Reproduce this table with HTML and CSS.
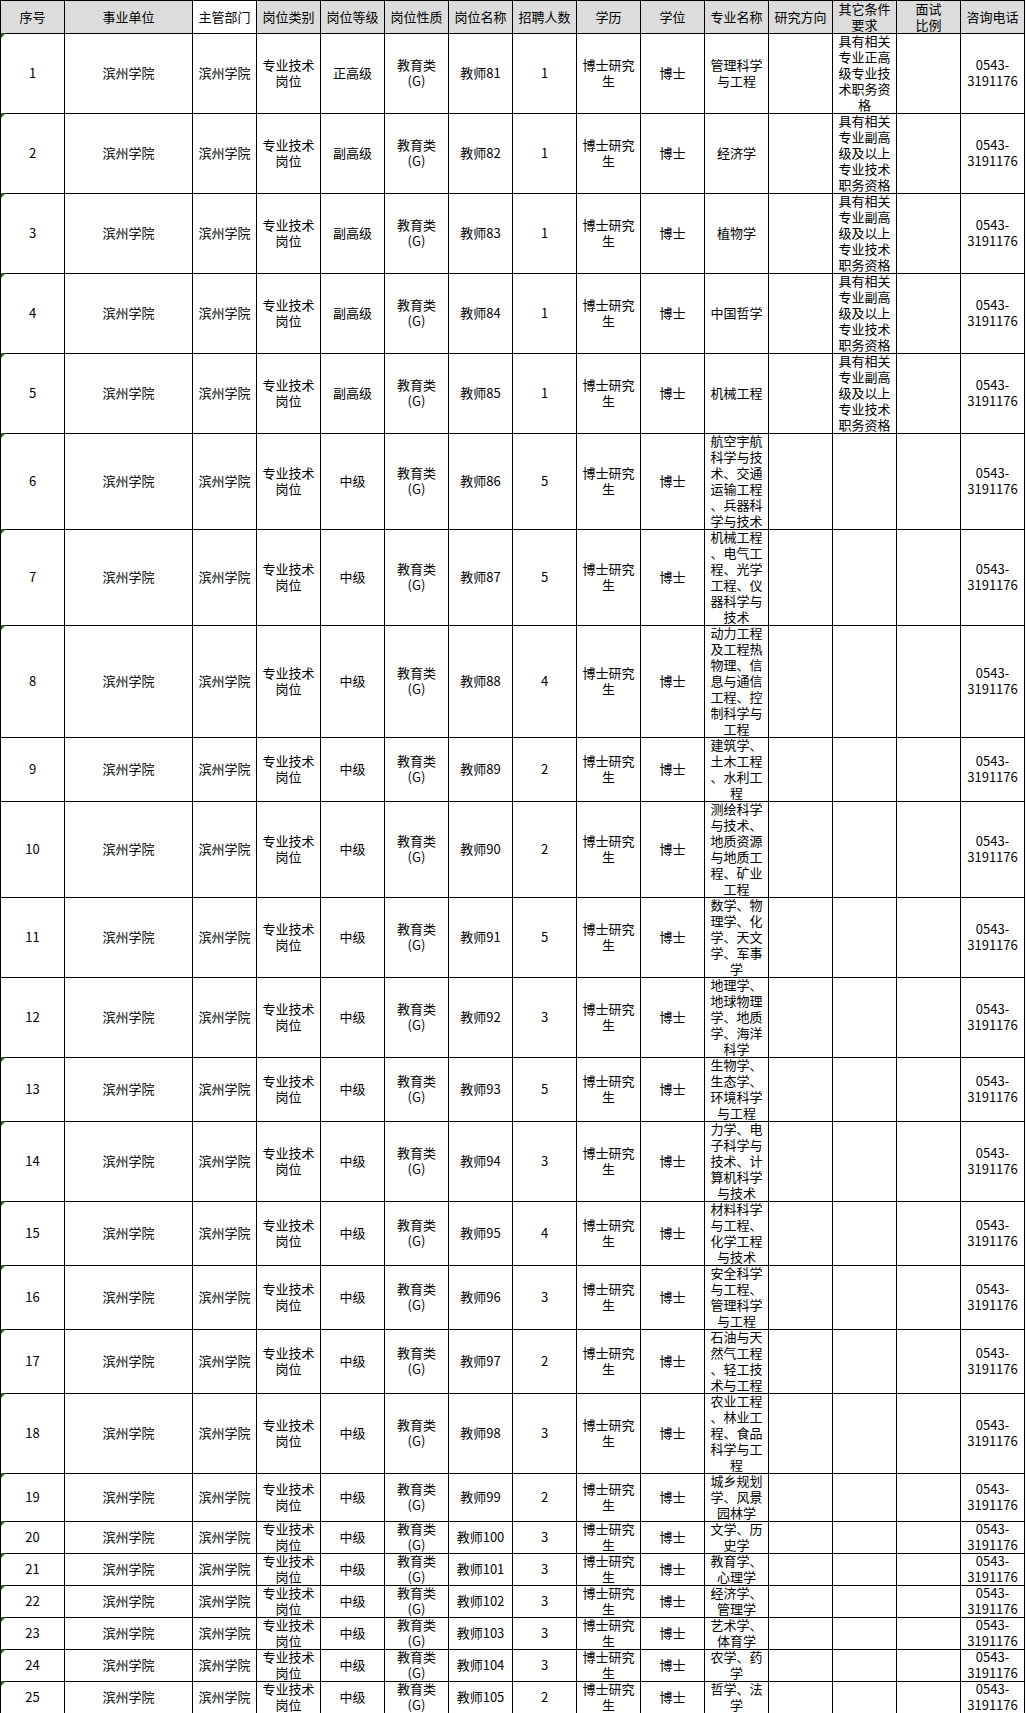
FILE: index.html
```html
<!DOCTYPE html>
<html lang="zh-CN">
<head>
<meta charset="utf-8">
<title>滨州学院 岗位表</title>
<link rel="stylesheet" href="styles.css">
</head>
<body>
<div class="sheet">
  <div class="row head h2">
    <div class="cell">序号</div>
    <div class="cell">事业单位</div>
    <div class="cell white">主管部门</div>
    <div class="cell">岗位类别</div>
    <div class="cell">岗位等级</div>
    <div class="cell">岗位性质</div>
    <div class="cell">岗位名称</div>
    <div class="cell">招聘人数</div>
    <div class="cell">学历</div>
    <div class="cell">学位</div>
    <div class="cell">专业名称</div>
    <div class="cell">研究方向</div>
    <div class="cell">其它条件<br>要求</div>
    <div class="cell">面试<br>比例</div>
    <div class="cell">咨询电话</div>
  </div>

  <div class="row h5">
    <div class="cell mark">1</div><div class="cell">滨州学院</div><div class="cell">滨州学院</div><div class="cell">专业技术<br>岗位</div><div class="cell">正高级</div><div class="cell">教育类<br>(G)</div><div class="cell">教师81</div><div class="cell">1</div><div class="cell">博士研究<br>生</div><div class="cell">博士</div><div class="cell">管理科学<br>与工程</div><div class="cell"></div><div class="cell">具有相关<br>专业正高<br>级专业技<br>术职务资<br>格</div><div class="cell"></div><div class="cell">0543-<br>3191176</div>
  </div>
  <div class="row h5">
    <div class="cell mark">2</div><div class="cell">滨州学院</div><div class="cell">滨州学院</div><div class="cell">专业技术<br>岗位</div><div class="cell">副高级</div><div class="cell">教育类<br>(G)</div><div class="cell">教师82</div><div class="cell">1</div><div class="cell">博士研究<br>生</div><div class="cell">博士</div><div class="cell">经济学</div><div class="cell"></div><div class="cell">具有相关<br>专业副高<br>级及以上<br>专业技术<br>职务资格</div><div class="cell"></div><div class="cell">0543-<br>3191176</div>
  </div>
  <div class="row h5">
    <div class="cell mark">3</div><div class="cell">滨州学院</div><div class="cell">滨州学院</div><div class="cell">专业技术<br>岗位</div><div class="cell">副高级</div><div class="cell">教育类<br>(G)</div><div class="cell">教师83</div><div class="cell">1</div><div class="cell">博士研究<br>生</div><div class="cell">博士</div><div class="cell">植物学</div><div class="cell"></div><div class="cell">具有相关<br>专业副高<br>级及以上<br>专业技术<br>职务资格</div><div class="cell"></div><div class="cell">0543-<br>3191176</div>
  </div>
  <div class="row h5">
    <div class="cell mark">4</div><div class="cell">滨州学院</div><div class="cell">滨州学院</div><div class="cell">专业技术<br>岗位</div><div class="cell">副高级</div><div class="cell">教育类<br>(G)</div><div class="cell">教师84</div><div class="cell">1</div><div class="cell">博士研究<br>生</div><div class="cell">博士</div><div class="cell">中国哲学</div><div class="cell"></div><div class="cell">具有相关<br>专业副高<br>级及以上<br>专业技术<br>职务资格</div><div class="cell"></div><div class="cell">0543-<br>3191176</div>
  </div>
  <div class="row h5">
    <div class="cell mark">5</div><div class="cell">滨州学院</div><div class="cell">滨州学院</div><div class="cell">专业技术<br>岗位</div><div class="cell">副高级</div><div class="cell">教育类<br>(G)</div><div class="cell">教师85</div><div class="cell">1</div><div class="cell">博士研究<br>生</div><div class="cell">博士</div><div class="cell">机械工程</div><div class="cell"></div><div class="cell">具有相关<br>专业副高<br>级及以上<br>专业技术<br>职务资格</div><div class="cell"></div><div class="cell">0543-<br>3191176</div>
  </div>
  <div class="row h6">
    <div class="cell mark">6</div><div class="cell">滨州学院</div><div class="cell">滨州学院</div><div class="cell">专业技术<br>岗位</div><div class="cell">中级</div><div class="cell">教育类<br>(G)</div><div class="cell">教师86</div><div class="cell">5</div><div class="cell">博士研究<br>生</div><div class="cell">博士</div><div class="cell">航空宇航<br>科学与技<br>术、交通<br>运输工程<br>、兵器科<br>学与技术</div><div class="cell"></div><div class="cell"></div><div class="cell"></div><div class="cell">0543-<br>3191176</div>
  </div>
  <div class="row h6">
    <div class="cell mark">7</div><div class="cell">滨州学院</div><div class="cell">滨州学院</div><div class="cell">专业技术<br>岗位</div><div class="cell">中级</div><div class="cell">教育类<br>(G)</div><div class="cell">教师87</div><div class="cell">5</div><div class="cell">博士研究<br>生</div><div class="cell">博士</div><div class="cell">机械工程<br>、电气工<br>程、光学<br>工程、仪<br>器科学与<br>技术</div><div class="cell"></div><div class="cell"></div><div class="cell"></div><div class="cell">0543-<br>3191176</div>
  </div>
  <div class="row h7">
    <div class="cell mark">8</div><div class="cell">滨州学院</div><div class="cell">滨州学院</div><div class="cell">专业技术<br>岗位</div><div class="cell">中级</div><div class="cell">教育类<br>(G)</div><div class="cell">教师88</div><div class="cell">4</div><div class="cell">博士研究<br>生</div><div class="cell">博士</div><div class="cell">动力工程<br>及工程热<br>物理、信<br>息与通信<br>工程、控<br>制科学与<br>工程</div><div class="cell"></div><div class="cell"></div><div class="cell"></div><div class="cell">0543-<br>3191176</div>
  </div>
  <div class="row h4">
    <div class="cell">9</div><div class="cell">滨州学院</div><div class="cell">滨州学院</div><div class="cell">专业技术<br>岗位</div><div class="cell">中级</div><div class="cell">教育类<br>(G)</div><div class="cell">教师89</div><div class="cell">2</div><div class="cell">博士研究<br>生</div><div class="cell">博士</div><div class="cell">建筑学、<br>土木工程<br>、水利工<br>程</div><div class="cell"></div><div class="cell"></div><div class="cell"></div><div class="cell">0543-<br>3191176</div>
  </div>
  <div class="row h6">
    <div class="cell">10</div><div class="cell">滨州学院</div><div class="cell">滨州学院</div><div class="cell">专业技术<br>岗位</div><div class="cell">中级</div><div class="cell">教育类<br>(G)</div><div class="cell">教师90</div><div class="cell">2</div><div class="cell">博士研究<br>生</div><div class="cell">博士</div><div class="cell">测绘科学<br>与技术、<br>地质资源<br>与地质工<br>程、矿业<br>工程</div><div class="cell"></div><div class="cell"></div><div class="cell"></div><div class="cell">0543-<br>3191176</div>
  </div>
  <div class="row h5">
    <div class="cell">11</div><div class="cell">滨州学院</div><div class="cell">滨州学院</div><div class="cell">专业技术<br>岗位</div><div class="cell">中级</div><div class="cell">教育类<br>(G)</div><div class="cell">教师91</div><div class="cell">5</div><div class="cell">博士研究<br>生</div><div class="cell">博士</div><div class="cell">数学、物<br>理学、化<br>学、天文<br>学、军事<br>学</div><div class="cell"></div><div class="cell"></div><div class="cell"></div><div class="cell">0543-<br>3191176</div>
  </div>
  <div class="row h5">
    <div class="cell">12</div><div class="cell">滨州学院</div><div class="cell">滨州学院</div><div class="cell">专业技术<br>岗位</div><div class="cell">中级</div><div class="cell">教育类<br>(G)</div><div class="cell">教师92</div><div class="cell">3</div><div class="cell">博士研究<br>生</div><div class="cell">博士</div><div class="cell">地理学、<br>地球物理<br>学、地质<br>学、海洋<br>科学</div><div class="cell"></div><div class="cell"></div><div class="cell"></div><div class="cell">0543-<br>3191176</div>
  </div>
  <div class="row h4">
    <div class="cell mark">13</div><div class="cell">滨州学院</div><div class="cell">滨州学院</div><div class="cell">专业技术<br>岗位</div><div class="cell">中级</div><div class="cell">教育类<br>(G)</div><div class="cell">教师93</div><div class="cell">5</div><div class="cell">博士研究<br>生</div><div class="cell">博士</div><div class="cell">生物学、<br>生态学、<br>环境科学<br>与工程</div><div class="cell"></div><div class="cell"></div><div class="cell"></div><div class="cell">0543-<br>3191176</div>
  </div>
  <div class="row h5">
    <div class="cell mark">14</div><div class="cell">滨州学院</div><div class="cell">滨州学院</div><div class="cell">专业技术<br>岗位</div><div class="cell">中级</div><div class="cell">教育类<br>(G)</div><div class="cell">教师94</div><div class="cell">3</div><div class="cell">博士研究<br>生</div><div class="cell">博士</div><div class="cell">力学、电<br>子科学与<br>技术、计<br>算机科学<br>与技术</div><div class="cell"></div><div class="cell"></div><div class="cell"></div><div class="cell">0543-<br>3191176</div>
  </div>
  <div class="row h4">
    <div class="cell mark">15</div><div class="cell">滨州学院</div><div class="cell">滨州学院</div><div class="cell">专业技术<br>岗位</div><div class="cell">中级</div><div class="cell">教育类<br>(G)</div><div class="cell">教师95</div><div class="cell">4</div><div class="cell">博士研究<br>生</div><div class="cell">博士</div><div class="cell">材料科学<br>与工程、<br>化学工程<br>与技术</div><div class="cell"></div><div class="cell"></div><div class="cell"></div><div class="cell">0543-<br>3191176</div>
  </div>
  <div class="row h4">
    <div class="cell mark">16</div><div class="cell">滨州学院</div><div class="cell">滨州学院</div><div class="cell">专业技术<br>岗位</div><div class="cell">中级</div><div class="cell">教育类<br>(G)</div><div class="cell">教师96</div><div class="cell">3</div><div class="cell">博士研究<br>生</div><div class="cell">博士</div><div class="cell">安全科学<br>与工程、<br>管理科学<br>与工程</div><div class="cell"></div><div class="cell"></div><div class="cell"></div><div class="cell">0543-<br>3191176</div>
  </div>
  <div class="row h4">
    <div class="cell mark">17</div><div class="cell">滨州学院</div><div class="cell">滨州学院</div><div class="cell">专业技术<br>岗位</div><div class="cell">中级</div><div class="cell">教育类<br>(G)</div><div class="cell">教师97</div><div class="cell">2</div><div class="cell">博士研究<br>生</div><div class="cell">博士</div><div class="cell">石油与天<br>然气工程<br>、轻工技<br>术与工程</div><div class="cell"></div><div class="cell"></div><div class="cell"></div><div class="cell">0543-<br>3191176</div>
  </div>
  <div class="row h5">
    <div class="cell mark">18</div><div class="cell">滨州学院</div><div class="cell">滨州学院</div><div class="cell">专业技术<br>岗位</div><div class="cell">中级</div><div class="cell">教育类<br>(G)</div><div class="cell">教师98</div><div class="cell">3</div><div class="cell">博士研究<br>生</div><div class="cell">博士</div><div class="cell">农业工程<br>、林业工<br>程、食品<br>科学与工<br>程</div><div class="cell"></div><div class="cell"></div><div class="cell"></div><div class="cell">0543-<br>3191176</div>
  </div>
  <div class="row h3">
    <div class="cell mark">19</div><div class="cell">滨州学院</div><div class="cell">滨州学院</div><div class="cell">专业技术<br>岗位</div><div class="cell">中级</div><div class="cell">教育类<br>(G)</div><div class="cell">教师99</div><div class="cell">2</div><div class="cell">博士研究<br>生</div><div class="cell">博士</div><div class="cell">城乡规划<br>学、风景<br>园林学</div><div class="cell"></div><div class="cell"></div><div class="cell"></div><div class="cell">0543-<br>3191176</div>
  </div>
  <div class="row h2">
    <div class="cell mark">20</div><div class="cell">滨州学院</div><div class="cell">滨州学院</div><div class="cell">专业技术<br>岗位</div><div class="cell">中级</div><div class="cell">教育类<br>(G)</div><div class="cell">教师100</div><div class="cell">3</div><div class="cell">博士研究<br>生</div><div class="cell">博士</div><div class="cell">文学、历<br>史学</div><div class="cell"></div><div class="cell"></div><div class="cell"></div><div class="cell">0543-<br>3191176</div>
  </div>
  <div class="row h2">
    <div class="cell mark">21</div><div class="cell">滨州学院</div><div class="cell">滨州学院</div><div class="cell">专业技术<br>岗位</div><div class="cell">中级</div><div class="cell">教育类<br>(G)</div><div class="cell">教师101</div><div class="cell">3</div><div class="cell">博士研究<br>生</div><div class="cell">博士</div><div class="cell">教育学、<br>心理学</div><div class="cell"></div><div class="cell"></div><div class="cell"></div><div class="cell">0543-<br>3191176</div>
  </div>
  <div class="row h2">
    <div class="cell mark">22</div><div class="cell">滨州学院</div><div class="cell">滨州学院</div><div class="cell">专业技术<br>岗位</div><div class="cell">中级</div><div class="cell">教育类<br>(G)</div><div class="cell">教师102</div><div class="cell">3</div><div class="cell">博士研究<br>生</div><div class="cell">博士</div><div class="cell">经济学、<br>管理学</div><div class="cell"></div><div class="cell"></div><div class="cell"></div><div class="cell">0543-<br>3191176</div>
  </div>
  <div class="row h2">
    <div class="cell mark">23</div><div class="cell">滨州学院</div><div class="cell">滨州学院</div><div class="cell">专业技术<br>岗位</div><div class="cell">中级</div><div class="cell">教育类<br>(G)</div><div class="cell">教师103</div><div class="cell">3</div><div class="cell">博士研究<br>生</div><div class="cell">博士</div><div class="cell">艺术学、<br>体育学</div><div class="cell"></div><div class="cell"></div><div class="cell"></div><div class="cell">0543-<br>3191176</div>
  </div>
  <div class="row h2">
    <div class="cell mark">24</div><div class="cell">滨州学院</div><div class="cell">滨州学院</div><div class="cell">专业技术<br>岗位</div><div class="cell">中级</div><div class="cell">教育类<br>(G)</div><div class="cell">教师104</div><div class="cell">3</div><div class="cell">博士研究<br>生</div><div class="cell">博士</div><div class="cell">农学、药<br>学</div><div class="cell"></div><div class="cell"></div><div class="cell"></div><div class="cell">0543-<br>3191176</div>
  </div>
  <div class="row h2">
    <div class="cell mark">25</div><div class="cell">滨州学院</div><div class="cell">滨州学院</div><div class="cell">专业技术<br>岗位</div><div class="cell">中级</div><div class="cell">教育类<br>(G)</div><div class="cell">教师105</div><div class="cell">2</div><div class="cell">博士研究<br>生</div><div class="cell">博士</div><div class="cell">哲学、法<br>学</div><div class="cell"></div><div class="cell"></div><div class="cell"></div><div class="cell">0543-<br>3191176</div>
  </div>
</div>
</body>
</html>
```

FILE: styles.css
```css
html, body {
  margin: 0;
  padding: 0;
  background: #ffffff;
}

body {
  font-family: "Noto Sans CJK SC", "Noto Sans", sans-serif;
  font-size: 13px;
  color: #000000;
}

.sheet {
  width: max-content;
  border-left: 1px solid #000000;
  border-top: 1px solid #000000;
}

.row {
  display: grid;
  grid-template-columns: 64px 128px repeat(13, 64px);
}

.h2 { height: 32px; }
.h3 { height: 48px; }
.h4 { height: 64px; }
.h5 { height: 80px; }
.h6 { height: 96px; }
.h7 { height: 112px; }

.cell {
  position: relative;
  box-sizing: border-box;
  border-right: 1px solid #000000;
  border-bottom: 1px solid #000000;
  display: flex;
  align-items: center;
  justify-content: center;
  text-align: center;
  line-height: 16px;
  white-space: nowrap;
  overflow: visible;
}

.head .cell {
  background: #dcdcdc;
}

.head .cell.white {
  background: #ffffff;
}

.mark::before {
  content: "";
  position: absolute;
  left: 0;
  top: 0;
  width: 0;
  height: 0;
  border-top: 5px solid #2f5f2f;
  border-right: 5px solid transparent;
}
```
